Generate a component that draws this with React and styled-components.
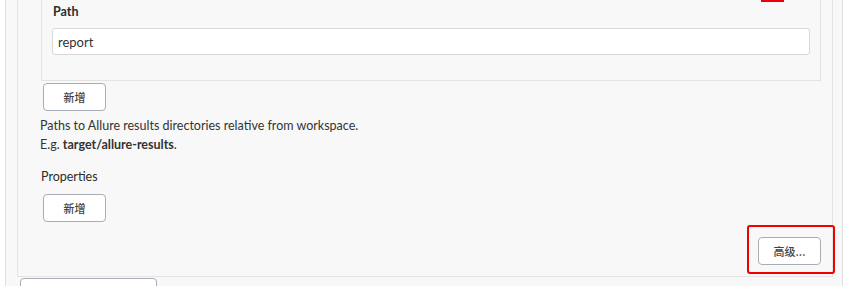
import React from "react";
import styled, {createGlobalStyle} from "styled-components";

const GlobalStyle = createGlobalStyle`
  html, body {
    margin: 0;
    padding: 0;
    background: #ffffff;
  }
  body {
    font-family: Lato, "Noto Sans CJK SC", sans-serif;
    color: #333333;
  }
`;

const Page = styled.div`
  width: 865px;
  height: 286px;
  overflow: hidden;
  background: #ffffff;
`;

const OuterPanel = styled.div`
  margin-left: 5px;
  width: 838px;
  box-sizing: border-box;
  height: 100%;
  padding: 0 9px 0 11px;
  background: #f8f8f8;
  border-left: 1px solid #dedede;
  border-right: 1px solid #dedede;
`;

const Section = styled.div`
  border: 1px solid #e4e4e4;
  border-top: none;
  padding: 0 11px 11px 22px;
  display: flex;
  flex-direction: column;
`;

const ItemBox = styled.div`
  position: relative;
  margin: 0 0 0 1px;
  padding: 2px 10px 25px 10px;
  border: 1px solid #e3e3e3;
  border-top: none;
  background: #f8f8f8;
`;

// bottom edge of the highlight drawn round the delete button above
const TopMark = styled.div`
  position: absolute;
  top: 0;
  right: 36px;
  width: 23px;
  height: 2px;
  background: #e8000b;
`;

const Label = styled.div`
  font-size: 12.5px;
  line-height: 20px;
  font-weight: ${p => (p.$bold ? 700 : 400)};
  color: #2b2b2b;
  margin-left: 1px;
  margin-top: ${p => p.$top || 0}px;
`;

const TextInput = styled.input`
  display: block;
  box-sizing: border-box;
  width: 100%;
  height: 27px;
  margin-top: 6px;
  padding: 0 5px;
  border: 1px solid #d9d9d9;
  border-radius: 3px;
  background: #ffffff;
  font-family: Lato, sans-serif;
  font-size: 13px;
  color: #333333;
  outline: none;
`;

const Button = styled.button`
  box-sizing: border-box;
  width: ${p => p.$width || 63}px;
  height: 28px;
  margin-top: ${p => p.$top || 0}px;
  margin-left: ${p => p.$left || 0}px;
  padding: 0;
  border: 1px solid #a7adb4;
  border-radius: 4px;
  background: #ffffff;
  font-family: "Noto Sans CJK SC", Lato, sans-serif;
  font-size: 11px;
  font-weight: 500;
  color: #444444;
  cursor: pointer;
`;

const Help = styled.div`
  margin-top: 5px;
  font-size: 12.5px;
  line-height: 19px;
  color: #333333;

  b {
    font-weight: 700;
  }
`;

const Actions = styled.div`
  display: flex;
  justify-content: flex-end;
  margin-top: 15px;
`;

const Highlighted = styled.div`
  position: relative;

  &::after {
    content: "";
    position: absolute;
    top: -12px;
    left: -11px;
    right: -14px;
    bottom: -9px;
    border: 2px solid #f00000;
    border-radius: 3px;
    pointer-events: none;
  }
`;

export default function App() {
    return (
        <Page>
            <GlobalStyle/>
            <OuterPanel>
                <Section>
                    <ItemBox>
                        <TopMark/>
                        <Label $bold>Path</Label>
                        <TextInput defaultValue="report"/>
                    </ItemBox>
                    <Button $top={2} $left={3}>新增</Button>
                    <Help>
                        Paths to Allure results directories relative from workspace.
                        <br/>
                        E.g. <b>target/allure-results</b>.
                    </Help>
                    <Label $top={13}>Properties</Label>
                    <Button $top={7} $left={3}>新增</Button>
                    <Actions>
                        <Highlighted>
                            <Button>高级...</Button>
                        </Highlighted>
                    </Actions>
                </Section>
                <Button $width={137} $top={1} $left={3}/>
            </OuterPanel>
        </Page>
    );
}
